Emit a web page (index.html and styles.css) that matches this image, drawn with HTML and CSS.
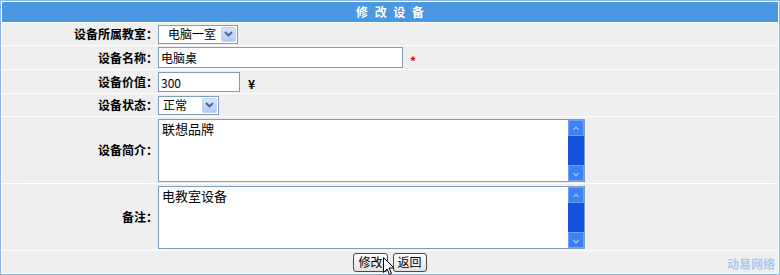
FILE: index.html
```html
<!DOCTYPE html>
<html lang="zh-CN">
<head>
    <meta charset="UTF-8">
    <title>修改设备</title>
    <link rel="stylesheet" href="styles.css">
</head>
<body>
    <div class="panel">
        <div class="panel-title">修 改 设 备</div>
        <form class="edit-form">
            <div class="form-row row-22">
                <label class="form-label">设备所属教室：</label>
                <div class="form-field">
                    <span class="combo combo-room">
                        <select class="combo-select">
                            <option>电脑一室</option>
                        </select>
                        <span class="combo-btn"><svg width="9" height="6" viewBox="0 0 9 6"><path d="M1 1 L4.5 4.5 L8 1" fill="none" stroke="#4d6185" stroke-width="1.8"/></svg></span>
                    </span>
                </div>
            </div>
            <div class="form-row row-23">
                <label class="form-label">设备名称：</label>
                <div class="form-field">
                    <input class="text-input input-name" type="text" value="电脑桌">
                    <span class="required">*</span>
                </div>
            </div>
            <div class="form-row row-23">
                <label class="form-label">设备价值：</label>
                <div class="form-field">
                    <input class="text-input input-price" type="text" value="300">
                    <span class="unit">¥</span>
                </div>
            </div>
            <div class="form-row row-22">
                <label class="form-label">设备状态：</label>
                <div class="form-field">
                    <span class="combo combo-state">
                        <select class="combo-select">
                            <option>正常</option>
                        </select>
                        <span class="combo-btn"><svg width="9" height="6" viewBox="0 0 9 6"><path d="M1 1 L4.5 4.5 L8 1" fill="none" stroke="#4d6185" stroke-width="1.8"/></svg></span>
                    </span>
                </div>
            </div>
            <div class="form-row row-66">
                <label class="form-label">设备简介：</label>
                <div class="form-field">
                    <div class="memo">
                        <textarea class="memo-text">联想品牌</textarea>
                        <div class="scrollbar">
                            <span class="sb-btn"><svg width="16" height="16" viewBox="0 0 16 16"><path d="M5 9 L8 6 L11 9" fill="none" stroke="#9fc2ff" stroke-width="1.5"/></svg></span>
                            <span class="sb-track"></span>
                            <span class="sb-btn"><svg width="16" height="16" viewBox="0 0 16 16"><path d="M5 7 L8 10 L11 7" fill="none" stroke="#9fc2ff" stroke-width="1.5"/></svg></span>
                        </div>
                    </div>
                </div>
            </div>
            <div class="form-row row-66">
                <label class="form-label">备注：</label>
                <div class="form-field">
                    <div class="memo">
                        <textarea class="memo-text">电教室设备</textarea>
                        <div class="scrollbar">
                            <span class="sb-btn"><svg width="16" height="16" viewBox="0 0 16 16"><path d="M5 9 L8 6 L11 9" fill="none" stroke="#9fc2ff" stroke-width="1.5"/></svg></span>
                            <span class="sb-track"></span>
                            <span class="sb-btn"><svg width="16" height="16" viewBox="0 0 16 16"><path d="M5 7 L8 10 L11 7" fill="none" stroke="#9fc2ff" stroke-width="1.5"/></svg></span>
                        </div>
                    </div>
                </div>
            </div>
            <div class="form-actions">
                <button class="btn" type="button">修改</button>
                <button class="btn" type="button">返回</button>
                <svg class="cursor" width="12" height="19" viewBox="0 0 12 19"><path d="M0.5 0.5 L0.5 15.5 L4 12 L6.5 17.5 L8.5 16.5 L6 11 L11 11 Z" fill="#fff" stroke="#000" stroke-width="1"/></svg>
                <span class="watermark">动易网络</span>
            </div>
        </form>
    </div>
</body>
</html>
```

FILE: styles.css
```css
* {
    margin: 0;
    padding: 0;
    box-sizing: border-box;
}

body {
    font-family: "Noto Sans CJK SC", "DejaVu Sans", sans-serif;
    font-size: 12px;
    line-height: 16px;
    color: #000;
    background: #fff;
}

.panel {
    width: 780px;
    height: 275px;
    border: 1px solid #8ab7e2;
    padding: 1px;
    background: #fff;
    display: flex;
    flex-direction: column;
    gap: 1px;
}

.panel-title {
    height: 20px;
    line-height: 20px;
    background: #4a97e2;
    color: #fff;
    font-weight: bold;
    text-align: center;
    word-spacing: 4px;
}

.edit-form {
    display: flex;
    flex-direction: column;
    gap: 1px;
}

.form-row {
    display: grid;
    grid-template-columns: 156px 1fr;
    align-items: center;
    background: #efefef;
}

.row-22 {
    height: 22px;
}

.row-23 {
    height: 23px;
}

.row-66 {
    height: 66px;
}

.form-label {
    text-align: right;
    font-weight: bold;
}

.form-field {
    display: flex;
    align-items: center;
}

/* dropdowns */
.combo {
    display: inline-flex;
    align-items: center;
    height: 19px;
    border: 1px solid #7f9db9;
    background: #fff;
    padding-right: 1px;
}

.combo-room {
    width: 80px;
}

.combo-state {
    width: 61px;
}

.combo-select {
    flex: 1;
    min-width: 0;
    appearance: none;
    -webkit-appearance: none;
    border: none;
    outline: none;
    background: transparent;
    font: inherit;
    color: #000;
    height: 17px;
    padding: 0 0 0 4px;
}

.combo-room .combo-select {
    padding-left: 9px;
}

.combo-btn {
    width: 15px;
    height: 15px;
    display: flex;
    align-items: center;
    justify-content: center;
    background: linear-gradient(#d6e3fd, #b3c9f5);
    border: 1px solid #c4d4f6;
    border-radius: 2px;
}

/* text inputs */
.text-input {
    font: inherit;
    color: #000;
    border: 1px solid #7f9db9;
    background: #fff;
    padding: 0 2px;
    outline: none;
}

.input-name {
    width: 245px;
    height: 21px;
}

.input-price {
    width: 82px;
    height: 20px;
    margin-top: 1px;
}

.required {
    color: #e00000;
    font-weight: bold;
    margin-left: 7px;
    margin-top: 7px;
}

.unit {
    font-weight: bold;
    margin-left: 8px;
    margin-top: 4px;
}

/* memo boxes */
.memo {
    display: flex;
    width: 427px;
    height: 63px;
    border: 1px solid #7f9db9;
    background: #fff;
}

.memo-text {
    flex: 1;
    border: none;
    outline: none;
    resize: none;
    overflow: hidden;
    font: inherit;
    font-size: 13px;
    line-height: 16px;
    padding: 1px 3px;
    color: #000;
}

.scrollbar {
    width: 16px;
    display: flex;
    flex-direction: column;
}

.sb-btn {
    height: 16px;
    background: #3d82f3;
    border: 1px solid #6da0f7;
    display: flex;
}

.sb-track {
    flex: 1;
    background: #1553dc;
}

/* buttons */
.form-actions {
    position: relative;
    height: 22px;
    background: #efefef;
    display: flex;
    justify-content: center;
    align-items: center;
    gap: 5px;
}

.btn {
    font: inherit;
    color: #000;
    height: 19px;
    padding: 0 4px;
    border: 1px solid #4a4a4a;
    border-radius: 3px;
    background: linear-gradient(#ffffff, #e2e2e2);
}

.cursor {
    position: absolute;
    left: 381px;
    top: 6px;
}

.watermark {
    position: absolute;
    right: 3px;
    bottom: 1px;
    color: #a8cbec;
    font-weight: bold;
}
```
